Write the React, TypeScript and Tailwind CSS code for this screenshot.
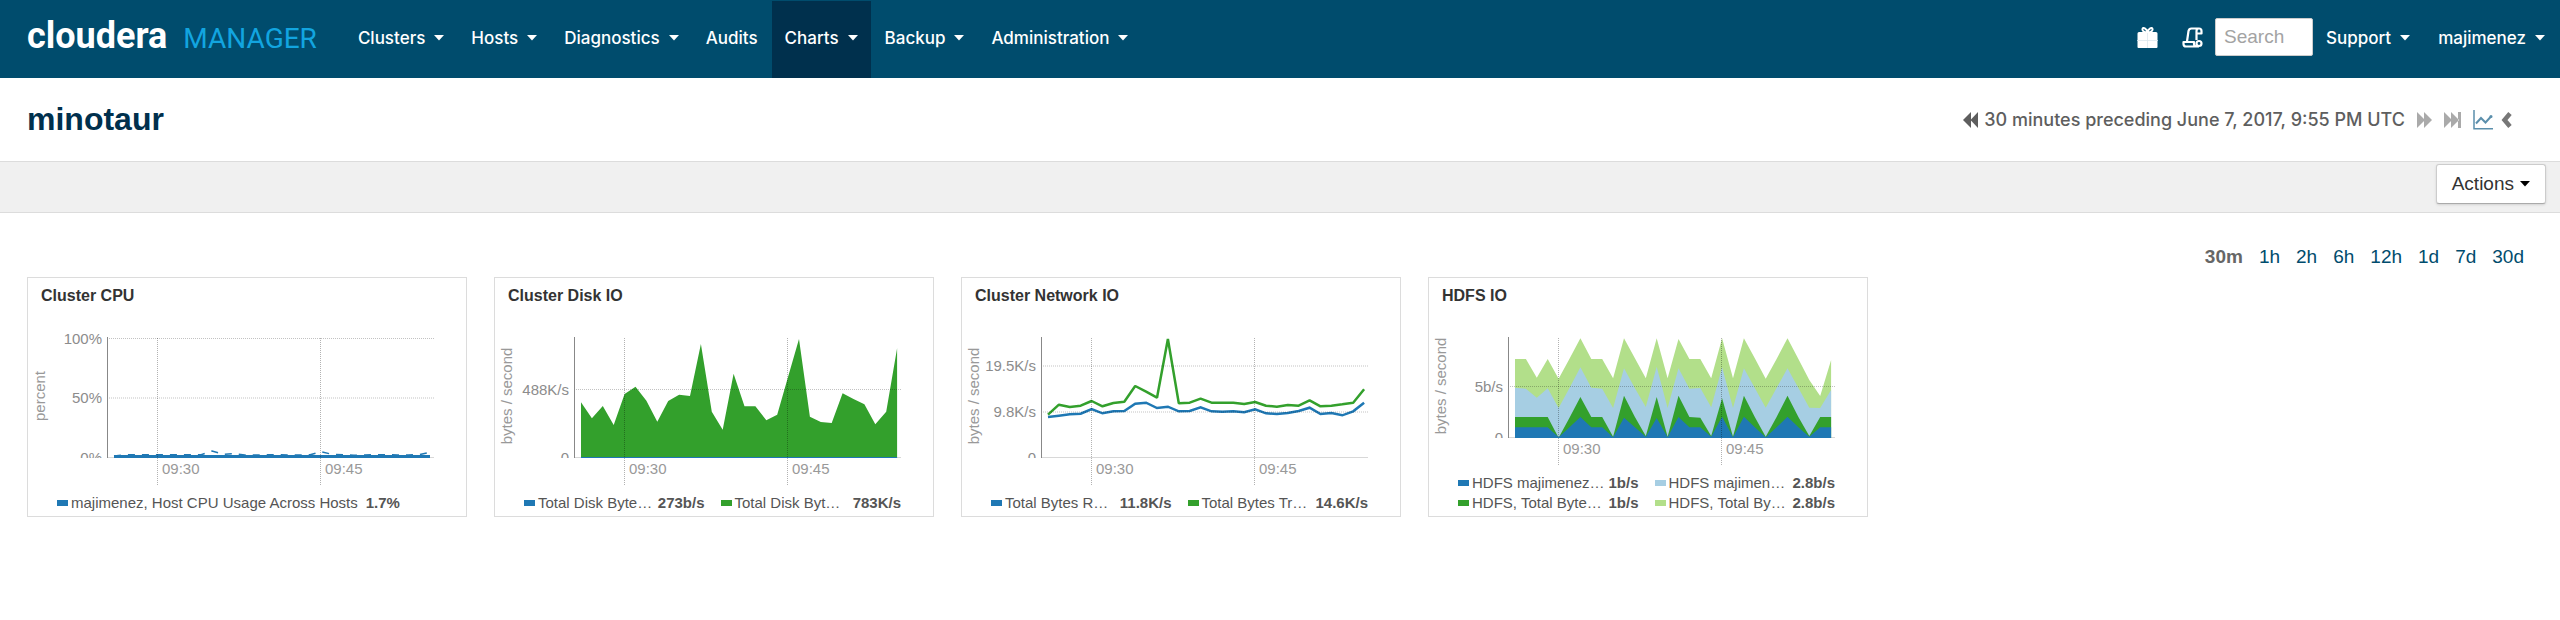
import React from "react";

const samplesX = (i: number) => 86 + i * 10.9;
// Samples are stored in thirds of a pixel on the plot grid.
const toY = (v: number) => v / 3 - 58;

const points = (values: number[]) =>
  values.map((v, i) => `${samplesX(i).toFixed(1)},${toY(v).toFixed(1)}`).join(" ");

const area = (values: number[], base: number) =>
  `${samplesX(0)},${base} ${points(values)} ${samplesX(29).toFixed(1)},${base}`;

const cpuMax = [588, 584, 584, 584, 584, 584, 584, 584, 584, 573, 583, 581, 585, 585, 584, 584, 585, 585, 584, 575, 583, 584, 586, 585, 584, 584, 585, 585, 584, 577];
const disk = [427, 475, 438, 495, 402, 380, 422, 485, 423, 404, 408, 252, 455, 509, 341, 439, 439, 481, 464, 350, 237, 470, 486, 489, 400, 417, 433, 493, 455, 265];
const netSent = [464, 434, 441, 437, 423, 439, 429, 425, 378, 395, 413, 237, 430, 428, 416, 428, 428, 428, 432, 426, 437, 440, 435, 437, 421, 439, 437, 433, 428, 388];
const netReceived = [471, 467, 463, 461, 447, 460, 454, 453, 431, 428, 444, 440, 454, 453, 442, 454, 455, 454, 457, 448, 460, 462, 459, 453, 443, 462, 459, 466, 454, 428];
const hdfs = [
  { color: "#b2df8a", values: [297, 297, 353, 297, 356, 296, 235, 297, 297, 355, 235, 295, 355, 235, 355, 237, 297, 297, 355, 235, 355, 235, 295, 356, 297, 235, 297, 360, 408, 300] },
  { color: "#a6cee3", values: [383, 386, 413, 385, 444, 384, 322, 383, 386, 444, 325, 385, 441, 320, 444, 325, 386, 384, 442, 322, 444, 325, 384, 443, 384, 325, 384, 443, 444, 390] },
  { color: "#33a02c", values: [471, 471, 471, 471, 533, 473, 411, 471, 471, 530, 407, 471, 528, 411, 530, 407, 471, 473, 528, 415, 530, 407, 471, 530, 471, 407, 471, 528, 471, 471] },
  { color: "#1f78b4", values: [502, 502, 502, 502, 532, 502, 471, 502, 502, 532, 473, 502, 530, 474, 532, 471, 502, 502, 530, 470, 532, 470, 502, 532, 502, 470, 502, 530, 502, 502] },
];

function Caret({ dark = false }: { dark?: boolean }) {
  return (
    <svg width="10" height="6" viewBox="0 0 10 6" className={dark ? "fill-black" : "fill-white"} aria-hidden="true">
      <path d="M0 0h10L5 5.5z" />
    </svg>
  );
}

function NavItem({ label, caret = true, active = false }: { label: string; caret?: boolean; active?: boolean }) {
  return (
    <a href="#" className={`flex h-[77px] items-center gap-[9px] px-[13px] pb-[3px] ${active ? "bg-[#00304d]" : ""}`}>
      {label}
      {caret && <Caret />}
    </a>
  );
}

type Tick = { y: number; label: string };

function Plot({ height, unit, unitY, ticks, children }: { height: number; unit: string; unitY: number; ticks: Tick[]; children: React.ReactNode }) {
  const id = `plot-${unit.length}-${height}-${ticks.length}`;
  return (
    <svg viewBox={`0 0 438 ${height + 28}`} className="block w-full text-[15px]" role="img" aria-label={unit}>
      <clipPath id={id}>
        <rect width="438" height={height} />
      </clipPath>
      <text transform={`translate(17 ${unitY}) rotate(-90)`} textAnchor="middle" fill="#999">{unit}</text>
      <path d={`M79 ${height - 0.5}H406`} stroke="#d8d8d8" />
      <g clipPath={`url(#${id})`}>{children}</g>
      <g stroke="#000" strokeOpacity="0.3" strokeDasharray="1 1">
        <path d={`M129.5 20V${height + 28}M292.5 20V${height + 28}`} />
      </g>
      {ticks.map((t) => (
        <path key={t.label} d={`M79 ${t.y}H406`} stroke="#000" strokeOpacity="0.24" strokeDasharray="1 1" />
      ))}
      <path d={`M79.5 19V${height}`} stroke="#888" />
      <g clipPath={`url(#${id})`} fill="#8c8c8c" textAnchor="end">
        {ticks.map((t) => (
          <text key={t.label} x="74" y={t.y + 5}>{t.label}</text>
        ))}
        <text x="74" y={height + 5}>{unit === "percent" ? "0%" : "0"}</text>
      </g>
      <text x="134" y={height + 16} fill="#999">09:30</text>
      <text x="297" y={height + 16} fill="#999">09:45</text>
    </svg>
  );
}

type Entry = { color: string; label: string; value: string };

function Card({ title, legend, children }: { title: string; legend: Entry[]; children: React.ReactNode }) {
  const single = legend.length === 1;
  return (
    <section className="w-[440px] border border-[#dcdcdc] bg-white">
      <h2 className="h-10 px-[13px] pt-[7px] text-[16px] leading-[22px] font-bold text-[#333]">{title}</h2>
      {children}
      <ul className={`grid gap-x-4 pt-[7px] pr-8 pb-[3px] pl-[29px] text-[15px] leading-5 text-[#555] ${single ? "grid-cols-1" : "grid-cols-2"}`}>
        {legend.map((e) => (
          <li key={e.label + e.color} className="flex items-center whitespace-nowrap">
            <span className={`mr-[3px] h-[6px] w-[11px] shrink-0 ${e.color}`} />
            <span>{e.label}</span>
            <b className={single ? "ml-2" : "ml-auto"}>{e.value}</b>
          </li>
        ))}
      </ul>
    </section>
  );
}

export default function App() {
  return (
    <div className="bg-white font-['Liberation_Sans',Arial,sans-serif] text-[19px] leading-6">
      <header className="flex h-[78px] items-center justify-between bg-[#004c6d] pr-[2px] pl-[27px] font-['Inter',sans-serif] text-[17px] font-medium text-white">
        <div className="flex items-center">
          <a href="#" className="mr-7 flex items-baseline gap-4 pb-1 font-['Roboto',sans-serif]">
            <span className="text-[36px] leading-10 font-bold">cloudera</span>
            <span className="text-[28px] leading-10 font-normal text-[#12a5e0]">MANAGER</span>
          </a>
          <nav className="flex items-center gap-px">
            <NavItem label="Clusters" />
            <NavItem label="Hosts" />
            <NavItem label="Diagnostics" />
            <NavItem label="Audits" caret={false} />
            <NavItem label="Charts" active />
            <NavItem label="Backup" />
            <NavItem label="Administration" />
          </nav>
        </div>
        <div className="flex items-center">
          <button type="button" aria-label="Parcels" className="mr-6 pb-[3px]">
            <svg width="21" height="21" viewBox="0 0 21 21" fill="#fff">
              <path d="M2 5h17a1.500 1.500 0 0 1 1.500 1.500V20a1 1 0 0 1-1 1h-18a1 1 0 0 1-1-1V6.500A1.500 1.500 0 0 1 2 5z" />
              <path d="M10.500 5.500C8 6 5 4 5.500 2S9.500 1 10.500 5.500C11.500 1 15 0 15.500 2S13 6 10.500 5.500z" fill="none" stroke="#fff" strokeWidth="2" />
              <path d="M10.500 6v15M0 13.500h21" stroke="#dce7ee" strokeWidth="0.800" />
            </svg>
          </button>
          <button type="button" aria-label="Running commands" className="mr-3 pb-[3px]">
            <svg width="21" height="21" viewBox="0 0 21 21" fill="none" stroke="#fff" strokeWidth="2.200" strokeLinejoin="round">
              <path d="M5 14.500 6.500 4Q7 1.500 9.500 1.500H17M14.500 13V4Q14.500 1.500 17 1.500T19.500 4V6.500H15M17 19.500H4Q1.500 19.500 1.500 17V15H12V17Q12 19.500 15 19.500" />
              <circle cx="17" cy="16.500" r="2.500" />
            </svg>
          </button>
          <input aria-label="Search" placeholder="Search" className="mb-1 h-[38px] w-[98px] rounded-[2px] border border-[#ccc] bg-white px-2 font-['Liberation_Sans',sans-serif] text-[19px] font-normal text-[#333] placeholder:text-[#a3a3a3]" />
          <div className="flex gap-[2px]">
            <NavItem label="Support" />
            <NavItem label="majimenez" />
          </div>
        </div>
      </header>

      <div className="flex h-[83px] items-center justify-between pr-12 pl-[27px]">
        <h1 className="pb-[2px] text-[32px] leading-10 font-bold text-[#00304d]">minotaur</h1>
        <div className="flex items-center font-['Inter',sans-serif] text-[18px] font-medium text-[#5e5e5e]">
          <button type="button" aria-label="Previous" className="mr-[6px]">
            <svg width="15" height="16" viewBox="0 0 15 16" fill="#5e5e5e"><path d="M8 0v16L0 8zM15 0v16L7.500 8z" /></svg>
          </button>
          <span>30 minutes preceding June 7, 2017, 9:55 PM UTC</span>
          <button type="button" aria-label="Next" className="ml-3">
            <svg width="15" height="16" viewBox="0 0 15 16" fill="#aaa"><path d="M0 0v16l8-8zM7 0v16l8-8z" /></svg>
          </button>
          <button type="button" aria-label="Now" className="ml-3">
            <svg width="17" height="16" viewBox="0 0 17 16" fill="#aaa"><path d="M0 0v16l8-8zM7 0v16l8-8zM14 0h3v16h-3z" /></svg>
          </button>
          <button type="button" aria-label="Chart view" className="ml-3">
            <svg width="20" height="20" viewBox="0 0 20 20" fill="none" stroke="#5b8fac" strokeWidth="1.500">
              <path d="M1 0v18.700h19" />
              <path d="M3 13.500 8 8l4.500 4.500 5.500-6" strokeWidth="2" />
              <circle cx="18" cy="6.500" r="0.800" />
            </svg>
          </button>
          <button type="button" aria-label="Expand" className="ml-2">
            <svg width="11" height="16" viewBox="0 0 11 16" fill="none" stroke="#777" strokeWidth="4.500"><path d="M9 1.500 3.500 8 9 14.500" /></svg>
          </button>
        </div>
      </div>

      <div className="flex h-[52px] items-start justify-end border-y border-[#dcdcdc] bg-[#f0f0f0] pt-[2px] pr-[14px]">
        <button type="button" className="flex h-10 items-center gap-[6px] rounded-[3px] border border-[#ccc] border-b-[#aaa] bg-white px-[15px] text-[#333] shadow-sm">
          Actions <Caret dark />
        </button>
      </div>

      <main className="px-[27px] pt-8">
        <nav className="flex justify-end gap-4 pr-[9px] text-[#004c6d]">
          <b className="text-[#666]">30m</b>
          <a href="#">1h</a>
          <a href="#">2h</a>
          <a href="#">6h</a>
          <a href="#">12h</a>
          <a href="#">1d</a>
          <a href="#">7d</a>
          <a href="#">30d</a>
        </nav>
        <div className="mt-2 flex flex-wrap gap-[27px]">
          <Card title="Cluster CPU" legend={[{ color: "bg-[#1f78b4]", label: "majimenez, Host CPU Usage Across Hosts", value: "1.7%" }]}>
            <Plot height={140} unit="percent" unitY={78} ticks={[{ y: 20.5, label: "100%" }, { y: 80, label: "50%" }]}>
              <polyline points={points(cpuMax)} fill="none" stroke="#1f78b4" strokeWidth="1.500" strokeDasharray="7 7" />
              <path d="M86 138.500H402" stroke="#1f78b4" strokeWidth="3" />
            </Plot>
          </Card>
          <Card
            title="Cluster Disk IO"
            legend={[
              { color: "bg-[#1f78b4]", label: "Total Disk Byte…", value: "273b/s" },
              { color: "bg-[#33a02c]", label: "Total Disk Byt…", value: "783K/s" },
            ]}
          >
            <Plot height={140} unit="bytes / second" unitY={78} ticks={[{ y: 71.5, label: "488K/s" }]}>
              <polygon points={area(disk, 140)} fill="#33a02c" />
              <path d="M86 139.500H402" stroke="#1f78b4" />
            </Plot>
          </Card>
          <Card
            title="Cluster Network IO"
            legend={[
              { color: "bg-[#1f78b4]", label: "Total Bytes R…", value: "11.8K/s" },
              { color: "bg-[#33a02c]", label: "Total Bytes Tr…", value: "14.6K/s" },
            ]}
          >
            <Plot height={140} unit="bytes / second" unitY={78} ticks={[{ y: 48, label: "19.5K/s" }, { y: 94, label: "9.8K/s" }]}>
              <polyline points={points(netReceived)} fill="none" stroke="#1f78b4" strokeWidth="2.500" />
              <polyline points={points(netSent)} fill="none" stroke="#33a02c" strokeWidth="2.500" strokeLinejoin="bevel" />
            </Plot>
          </Card>
          <Card
            title="HDFS IO"
            legend={[
              { color: "bg-[#1f78b4]", label: "HDFS majimenez…", value: "1b/s" },
              { color: "bg-[#a6cee3]", label: "HDFS majimen…", value: "2.8b/s" },
              { color: "bg-[#33a02c]", label: "HDFS, Total Byte…", value: "1b/s" },
              { color: "bg-[#b2df8a]", label: "HDFS, Total By…", value: "2.8b/s" },
            ]}
          >
            <Plot height={120} unit="bytes / second" unitY={68} ticks={[{ y: 68.5, label: "5b/s" }]}>
              {hdfs.map((s) => (
                <polygon key={s.color} points={area(s.values, 120)} fill={s.color} />
              ))}
            </Plot>
          </Card>
        </div>
      </main>
    </div>
  );
}
